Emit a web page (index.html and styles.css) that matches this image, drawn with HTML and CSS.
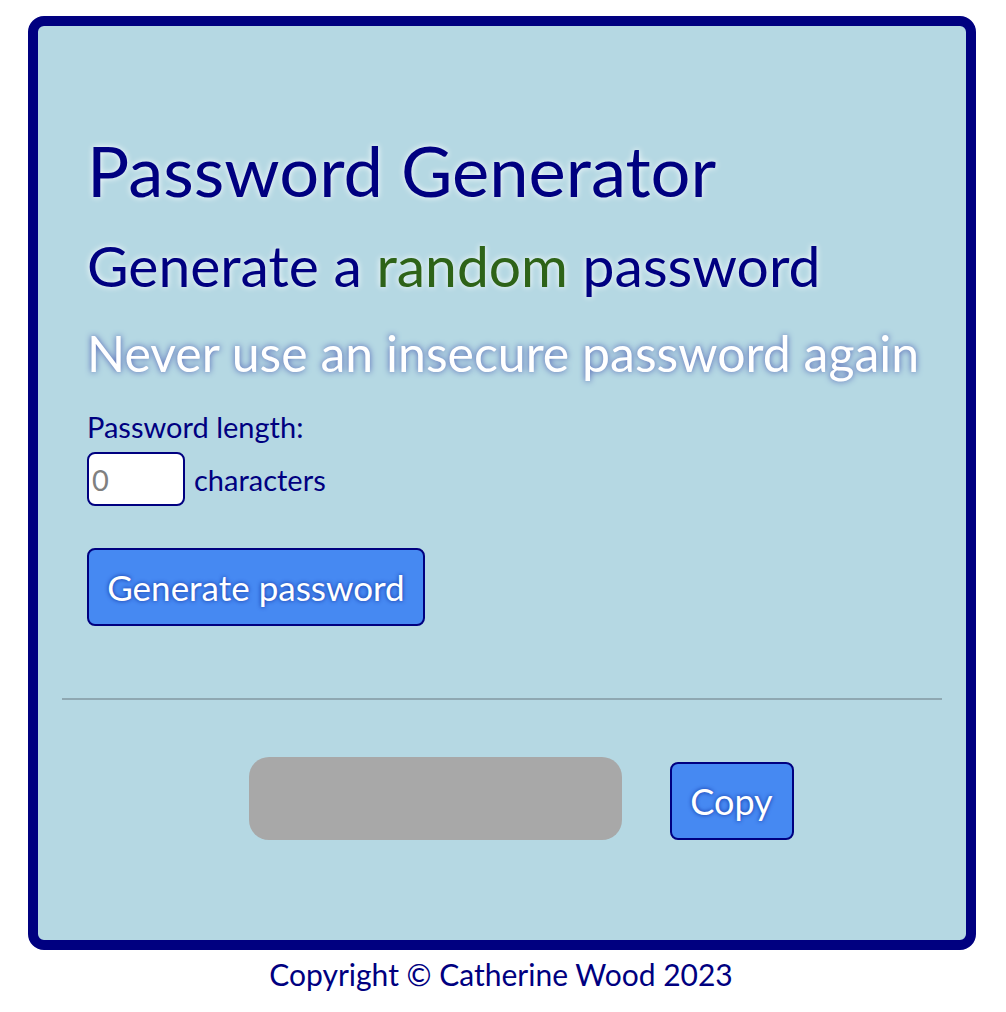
FILE: index.html
```html
<!DOCTYPE html>
<html lang="en">
<head>
<meta charset="utf-8">
<title>Password Generator</title>
<link rel="stylesheet" href="styles.css">
</head>
<body>
<main class="card">
  <section class="top">
    <h1 class="title">Password Generator</h1>
    <h2 class="subtitle">Generate a <span class="random">random</span> password</h2>
    <h3 class="tagline">Never use an insecure password again</h3>
    <label class="len-label" for="len">Password length:</label>
    <div class="len-row">
      <input id="len" class="len-input" type="number" placeholder="0">
      <span class="len-unit">characters</span>
    </div>
    <button class="btn btn-generate" type="button">Generate password</button>
  </section>
  <hr class="divider">
  <section class="output">
    <div class="output-box"></div>
    <button class="btn btn-copy" type="button">Copy</button>
  </section>
</main>
<footer class="footer">Copyright © Catherine Wood 2023</footer>
</body>
</html>
```
FILE: styles.css
```css
* { box-sizing: border-box; }
body {
  margin: 0;
  font-family: "Lato", "Noto Sans", sans-serif;
  color: #000080;
  background: #ffffff;
}
.card {
  width: 948px;
  height: 934px;
  margin: 16px 0 0 28px;
  border: 10px solid #000080;
  border-radius: 16px;
  background: #b5d8e3;
  padding: 0 24px;
}
.top {
  padding: 102px 0 0 25px;
}
.title {
  margin: 0;
  font-size: 70.5px;
  font-weight: 400;
  line-height: 84px;
  text-shadow: 0 0 6px #ffffff;
}
.subtitle {
  margin: 19px 0 0;
  font-size: 57px;
  font-weight: 400;
  line-height: 68px;
  text-shadow: 0 0 6px #ffffff;
}
.random { color: #2e6318; }
.tagline {
  margin: 24px 0 0;
  font-size: 50px;
  font-weight: 400;
  line-height: 60px;
  color: #ffffff;
  text-shadow: 0 0 6px #4a5bb0;
}
.len-label {
  display: block;
  margin-top: 27px;
  font-size: 29px;
  line-height: 34px;
}
.len-row {
  display: flex;
  align-items: center;
  gap: 9px;
  margin-top: 8px;
}
.len-input {
  width: 98px;
  height: 54px;
  border: 2px solid #000080;
  border-radius: 8px;
  background: #fff;
  font-family: inherit;
  font-size: 29px;
  padding: 0 3px;
  color: #000;
}
.len-input::placeholder { color: #808080; }
.len-unit { font-size: 29px; line-height: 35px; }
.btn {
  background: #4689f2;
  border: 2px solid #000080;
  border-radius: 8px;
  color: #fff;
  font-family: inherit;
  text-shadow: 0 0 4px #1030a0;
  cursor: pointer;
}
.btn-generate {
  display: block;
  margin-top: 42px;
  width: 338px;
  height: 78px;
  font-size: 35px;
  padding: 0;
}
.divider {
  margin: 72px 0 0;
  border: 0;
  border-top: 2px solid #8fa8b2;
}
.output {
  display: flex;
  justify-content: center;
  align-items: flex-end;
  gap: 48px;
  margin-top: 57px;
  padding-left: 38px;
}
.output-box {
  width: 373px;
  height: 83px;
  background: #a8a8a8;
  border-radius: 20px;
}
.btn-copy {
  width: 124px;
  height: 78px;
  font-size: 36px;
  padding: 0;
}
.footer {
  text-align: center;
  font-size: 30px;
  line-height: 34px;
  margin-top: 7px;
  padding-right: 4px;
}
```
